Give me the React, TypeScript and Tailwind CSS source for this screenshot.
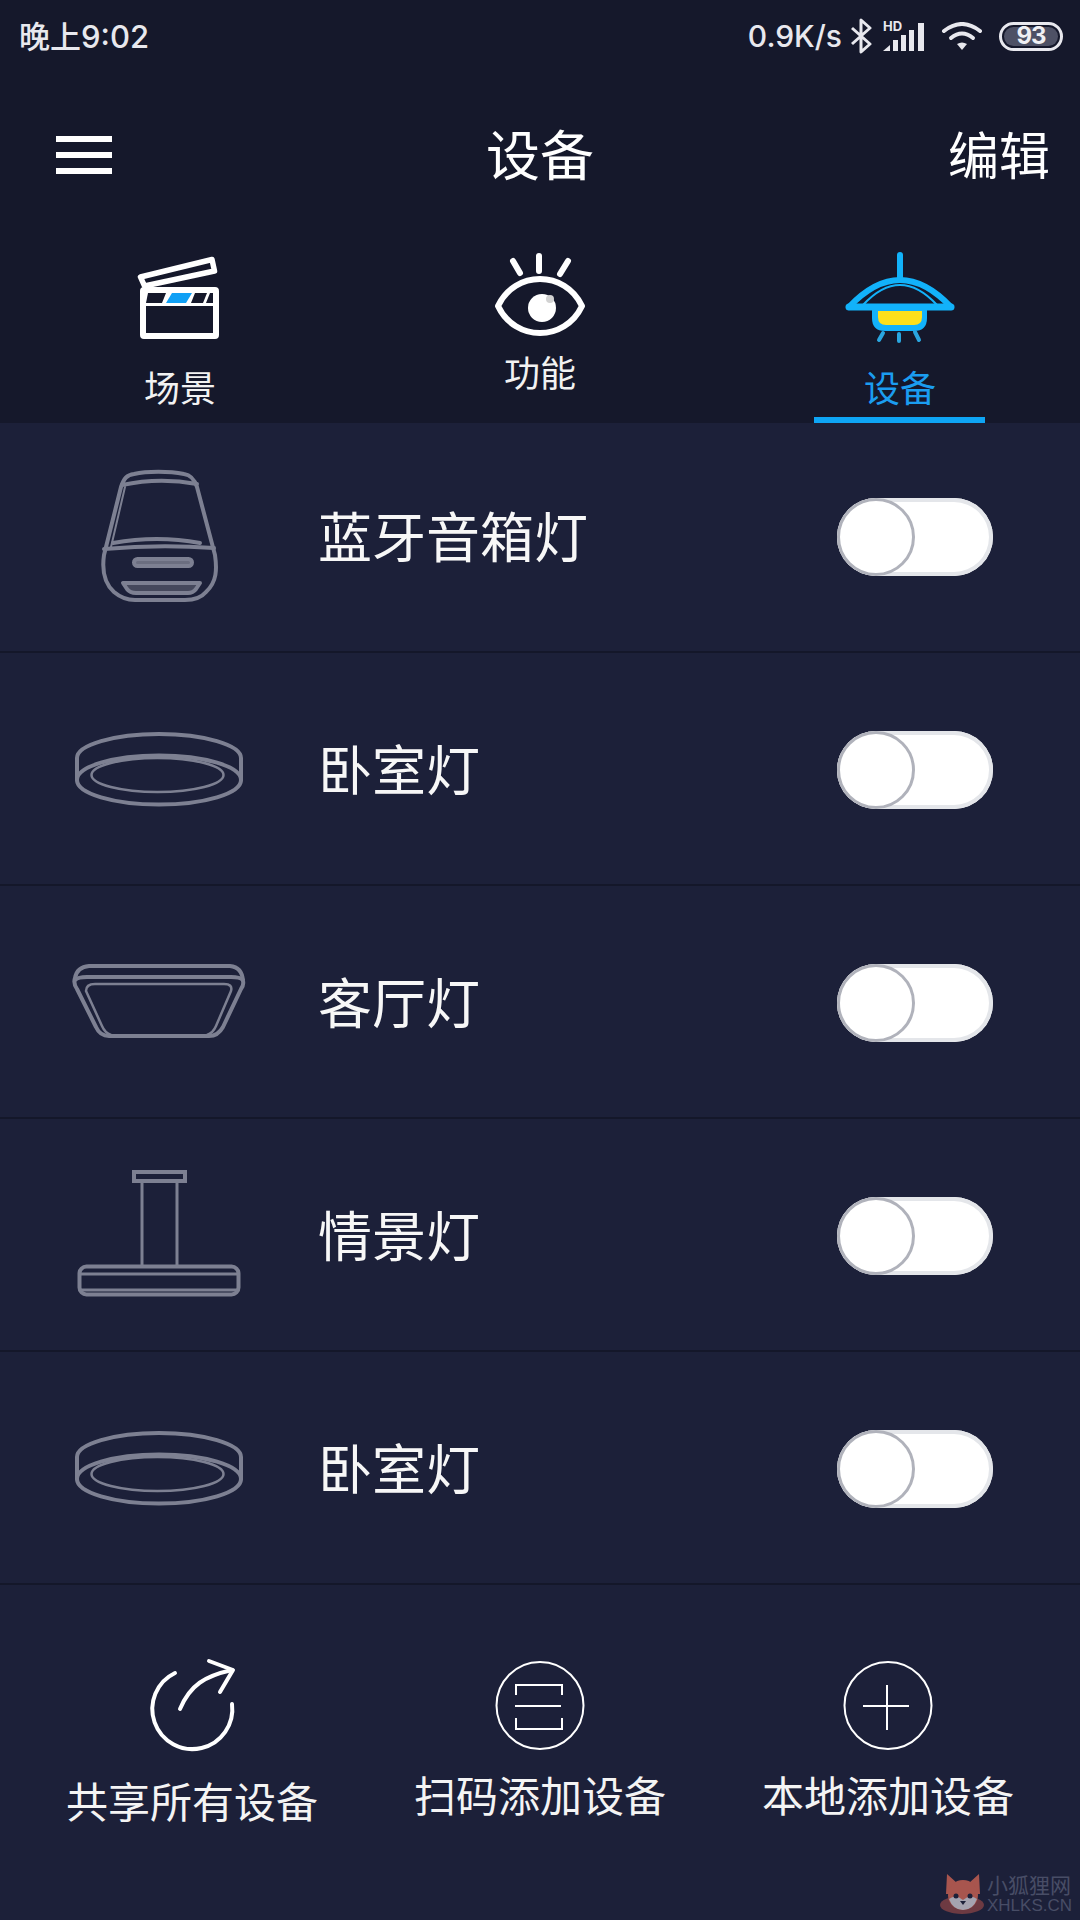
import type { ReactNode } from "react";

const CJK = "font-['Noto_Sans_CJK_SC','Noto_Sans',sans-serif]";

function Clapper() {
  return (
    <svg viewBox="-15 -5 120 100" className="h-[100px] w-[120px]" fill="none">
      <path d="M5.5 27 77 9.5 79.5 21 9.5 36Z" stroke="#fff" strokeWidth="5.5" strokeLinejoin="round" />
      <rect x="8" y="40" width="73" height="46" rx="1" stroke="#fff" strokeWidth="6" />
      <rect x="8" y="40" width="73" height="16" fill="#fff" />
      <path d="M13 43H31L27 53H11Z" fill="#15182b" />
      <path d="M37 43H57L51 53H31Z" fill="#10a0f5" />
      <path d="M60 43H72L68 53H56Z" fill="#15182b" />
      <path d="M75 43H78V53H71Z" fill="#15182b" />
    </svg>
  );
}

function Eye() {
  return (
    <svg viewBox="0 0 120 100" className="h-[100px] w-[120px]" fill="none" stroke="#fff" strokeWidth="6" strokeLinecap="round">
      <path d="M33 16 40 28M59 11V26M88 16 80 29" />
      <path d="M18 61C35 25 85 25 102 61 85 97 35 97 18 61Z" strokeLinejoin="round" />
      <circle cx="62" cy="63" r="14" fill="#fff" stroke="none" />
      <circle cx="70" cy="54" r="4" fill="#d2d2d2" stroke="none" />
    </svg>
  );
}

function Lamp() {
  return (
    <svg viewBox="0 -2 120 100" className="h-[100px] w-[120px]" fill="none" stroke="#12b2fa" strokeLinecap="round">
      <path d="M60 8V32" strokeWidth="6" />
      <path d="M9 60Q60 6 111 60" strokeWidth="6" />
      <path d="M23 58Q60 18 97 58" strokeWidth="2" />
      <path d="M9 60H111" strokeWidth="7" />
      <path d="M32 62H87V71Q87 84 74 84H45Q32 84 32 71Z" fill="#12b2fa" stroke="none" />
      <path d="M38 64H82V70Q82 78 74 78H46Q38 78 38 70Z" fill="#fde01a" stroke="none" />
      <path d="M43 86 39 93M59 87V94M75 85 79 93" stroke="#2aa6e0" strokeWidth="4" />
    </svg>
  );
}

function DeviceSvg({ children }: { children: ReactNode }) {
  return (
    <svg
      viewBox="0 0 200 160"
      className="ml-[59px] mr-[59px] h-[160px] w-[200px] shrink-0"
      fill="none"
      stroke="#7d8092"
      strokeWidth="4"
      strokeLinecap="round"
      strokeLinejoin="round"
    >
      {children}
    </svg>
  );
}

function Speaker() {
  return (
    <DeviceSvg>
      <path d="M62 30 45 98C43 112 44 125 55 135 62 141 68 143 76 143H126C136 143 142 141 147 135 158 125 158 112 156 98L138 30C135 21 131 18 125 17 110 14 88 14 75 17 68 18 65 21 62 30Z" />
      <path d="M63 28Q100 20 138 27" />
      <path d="M66 30 52 90" strokeWidth="2" />
      <path d="M54 86Q98 78 141 86" />
      <path d="M45 92Q100 87 155 91" />
      <rect x="75" y="102" width="58" height="7" rx="3.5" fill="#6b6e80" />
      <path d="M64 126H141L137 132Q134 136 129 136H77Q71 136 68 132Z" fill="#45485c" />
    </DeviceSvg>
  );
}

function Ring() {
  return (
    <DeviceSvg>
      <path d="M18 90V68C18 55 55 44 100 44S182 55 182 68V90" />
      <ellipse cx="100" cy="90" rx="82" ry="24.5" />
      <ellipse cx="98.5" cy="85" rx="66" ry="17" strokeWidth="2.5" />
    </DeviceSvg>
  );
}

function Square() {
  return (
    <DeviceSvg>
      <path d="M30 43H171Q183 44 184 58 185 62 182 66L164 104Q159 113 150 113H50Q41 113 37 104L18 66Q14 60 16 55 18 44 30 43Z" />
      <path d="M16 57Q19 54 28 54H172Q181 54 184 57" />
      <path d="M52 112Q46 110 43 103L27 68Q27 61 36 61H165Q174 61 172 68L157 103Q154 110 148 112" strokeWidth="2.5" />
    </DeviceSvg>
  );
}

function Pendant() {
  return (
    <DeviceSvg>
      <rect x="75" y="16" width="51" height="9" strokeLinejoin="miter" />
      <path d="M83 26V109M118 26V109" strokeWidth="3" />
      <rect x="20.5" y="110.5" width="159" height="28" rx="7" />
      <path d="M21 118H179M21 134H179" strokeWidth="3" />
    </DeviceSvg>
  );
}

function Toggle() {
  return (
    <div className="mr-[87px] ml-auto flex h-[78px] w-[156px] shrink-0 rounded-full bg-white shadow-[inset_0_0_0_4px_#e4e6ea]">
      <div className="h-[78px] w-[78px] rounded-full border-[3px] border-[#b0b2bb] bg-white" />
    </div>
  );
}

const DEVICES = [
  { name: "蓝牙音箱灯", icon: <Speaker />, size: "h-[230px]" },
  { name: "卧室灯", icon: <Ring />, size: "h-[233px] pt-[2px]" },
  { name: "客厅灯", icon: <Square />, size: "h-[233px] pt-[2px]" },
  { name: "情景灯", icon: <Pendant />, size: "h-[233px] pt-[2px]" },
  { name: "卧室灯", icon: <Ring />, size: "h-[233px] pt-[2px]" },
];

function StatusIcons() {
  return (
    <div className="flex items-center">
      <span className="font-['Inter',sans-serif] text-[30px] font-medium leading-none text-[#e8e8ee]">0.9K/s</span>
      <svg viewBox="0 0 22 36" className="ml-[8px] h-[36px] w-[22px]" fill="none" stroke="#e8e8ee" strokeWidth="3">
        <path d="M2 10 20 26 11 34V2L20 10 2 26" strokeLinejoin="round" />
      </svg>
      <div className="ml-[11px] flex h-[32px] w-[42px] flex-col">
        <span className="h-0 font-['Inter',sans-serif] text-[13px] font-bold leading-[13px] text-[#e8e8ee]">HD</span>
        <svg viewBox="0 0 42 32" className="h-[32px] w-[42px]" fill="#e8e8ee">
          <path d="M0 31 7 25V31Z" />
          <rect x="10" y="20" width="5" height="11" />
          <rect x="18" y="15" width="5" height="16" />
          <rect x="26" y="10" width="5" height="21" />
          <rect x="35" y="3" width="6" height="28" />
        </svg>
      </div>
      <svg viewBox="0 0 42 28" className="ml-[16px] h-[28px] w-[42px]" fill="none" stroke="#e8e8ee" strokeWidth="4" strokeLinecap="round">
        <path d="M3 9Q21 -5 39 9" />
        <path d="M10 16Q21 7 32 16" />
        <path d="M21 28 16 22Q21 19 26 22Z" fill="#e8e8ee" stroke="none" />
      </svg>
      <div className="ml-[16px] flex h-[29px] w-[64px] items-center rounded-full border-[3px] border-[#e8e8ee] p-[2px]">
        <div className="flex h-full w-[54px] items-center justify-center rounded-full bg-[#4e5165] font-['Inter',sans-serif] text-[24px] font-bold leading-none tracking-[-1px] text-[#f0f0f4]">
          93
        </div>
      </div>
    </div>
  );
}

function Fox() {
  return (
    <svg viewBox="0 0 46 44" className="h-[44px] w-[46px]">
      <ellipse cx="23" cy="33" rx="22" ry="9" fill="#6d3a42" />
      <path d="M8 2 18 11H30L40 2 41 22H7Z" fill="#a8554e" />
      <circle cx="24" cy="23" r="15" fill="#a8554e" />
      <path d="M10 27Q17 22 24 28 31 22 38 27 34 38 24 38 14 38 10 27Z" fill="#a5a3b0" />
      <circle cx="17" cy="24" r="2.5" fill="#1c2039" />
      <circle cx="31" cy="24" r="2.5" fill="#1c2039" />
      <path d="M21 29H27L24 33Z" fill="#1c2039" />
    </svg>
  );
}

export default function App() {
  return (
    <div className={`relative h-[1920px] w-[1080px] overflow-hidden bg-[#1c2039] text-white ${CJK}`}>
      <div className="bg-[#15182b]">
        <div className="flex h-[72px] items-center justify-between pl-[19px] pr-[17px]">
          <span className="font-['Inter','Noto_Sans_CJK_SC',sans-serif] text-[31px] font-medium leading-none text-[#e8e8ee]">晚上9:02</span>
          <StatusIcons />
        </div>

        <div className="grid h-[166px] grid-cols-[1fr_auto_1fr] items-center px-[30px]">
          <div className="ml-[26px] flex w-[56px] flex-col gap-[10px]">
            <div className="h-[6px] bg-white" />
            <div className="h-[6px] bg-white" />
            <div className="h-[6px] bg-white" />
          </div>
          <span className="pb-[4px] text-[54px] leading-none">设备</span>
          <span className="justify-self-end pb-[4px] text-[51px] leading-none">编辑</span>
        </div>

        <div className="grid h-[185px] grid-cols-3">
          <div className="flex flex-col items-center pt-[7px]">
            <Clapper />
            <span className="mt-[16px] text-[36px] leading-[50px] text-[#f2f2f2]">场景</span>
          </div>
          <div className="flex flex-col items-center pt-[7px]">
            <Eye />
            <span className="mt-[1px] text-[36px] leading-[50px] text-[#f2f2f2]">功能</span>
          </div>
          <div className="flex flex-col items-center pt-[7px]">
            <Lamp />
            <span className="mt-[16px] text-[36px] leading-[50px] text-[#1b9df0]">设备</span>
            <div className="mt-auto h-[6px] w-[171px] -translate-x-[1px] bg-[#0ea5f5]" />
          </div>
        </div>
      </div>

      {DEVICES.map((d, i) => (
        <div key={i} className={`flex items-center border-b-2 border-[#14172a] ${d.size}`}>
          {d.icon}
          <span className="pb-[4px] text-[54px] leading-none text-[#f7f7f7]">{d.name}</span>
          <Toggle />
        </div>
      ))}

      <div className="grid grid-cols-3 px-[18px] pt-[65px]">
        <div className="flex flex-col items-center">
          <svg viewBox="-3 0 110 110" className="h-[110px] w-[110px]" fill="none" stroke="#fff" strokeWidth="4" strokeLinecap="round" strokeLinejoin="round">
            <path d="M35 23A40 40 0 1 0 92 54" />
            <path d="M40 59C50 35 65 26 92 20" />
            <path d="M69 11 93 20 80 42" />
          </svg>
          <span className="mt-[15px] text-[42px] leading-[50px] text-[#f4f4f4]">共享所有设备</span>
        </div>
        <div className="flex flex-col items-center">
          <svg viewBox="0 0 110 110" className="h-[110px] w-[110px]" fill="none" stroke="#fff" strokeWidth="2">
            <circle cx="55" cy="55.5" r="43.5" />
            <path d="M31 45V35H77V45M30 56H76M31 68V79H77V68" />
          </svg>
          <span className="mt-[9px] text-[42px] leading-[50px] text-[#f4f4f4]">扫码添加设备</span>
        </div>
        <div className="flex flex-col items-center">
          <svg viewBox="0 0 110 110" className="h-[110px] w-[110px]" fill="none" stroke="#fff" strokeWidth="2">
            <circle cx="55" cy="55.5" r="43.5" />
            <path d="M30 56H76M54 35V80" />
          </svg>
          <span className="mt-[9px] text-[42px] leading-[50px] text-[#f4f4f4]">本地添加设备</span>
        </div>
      </div>

      <div className="absolute bottom-[4px] right-[8px] flex items-center gap-[2px]">
        <Fox />
        <div className="flex flex-col">
          <span className="text-[21px] leading-[24px] text-[#484d66]">小狐狸网</span>
          <span className="font-['Liberation_Sans',sans-serif] text-[17px] leading-[20px] text-[#484d66]">XHLKS.CN</span>
        </div>
      </div>
    </div>
  );
}
